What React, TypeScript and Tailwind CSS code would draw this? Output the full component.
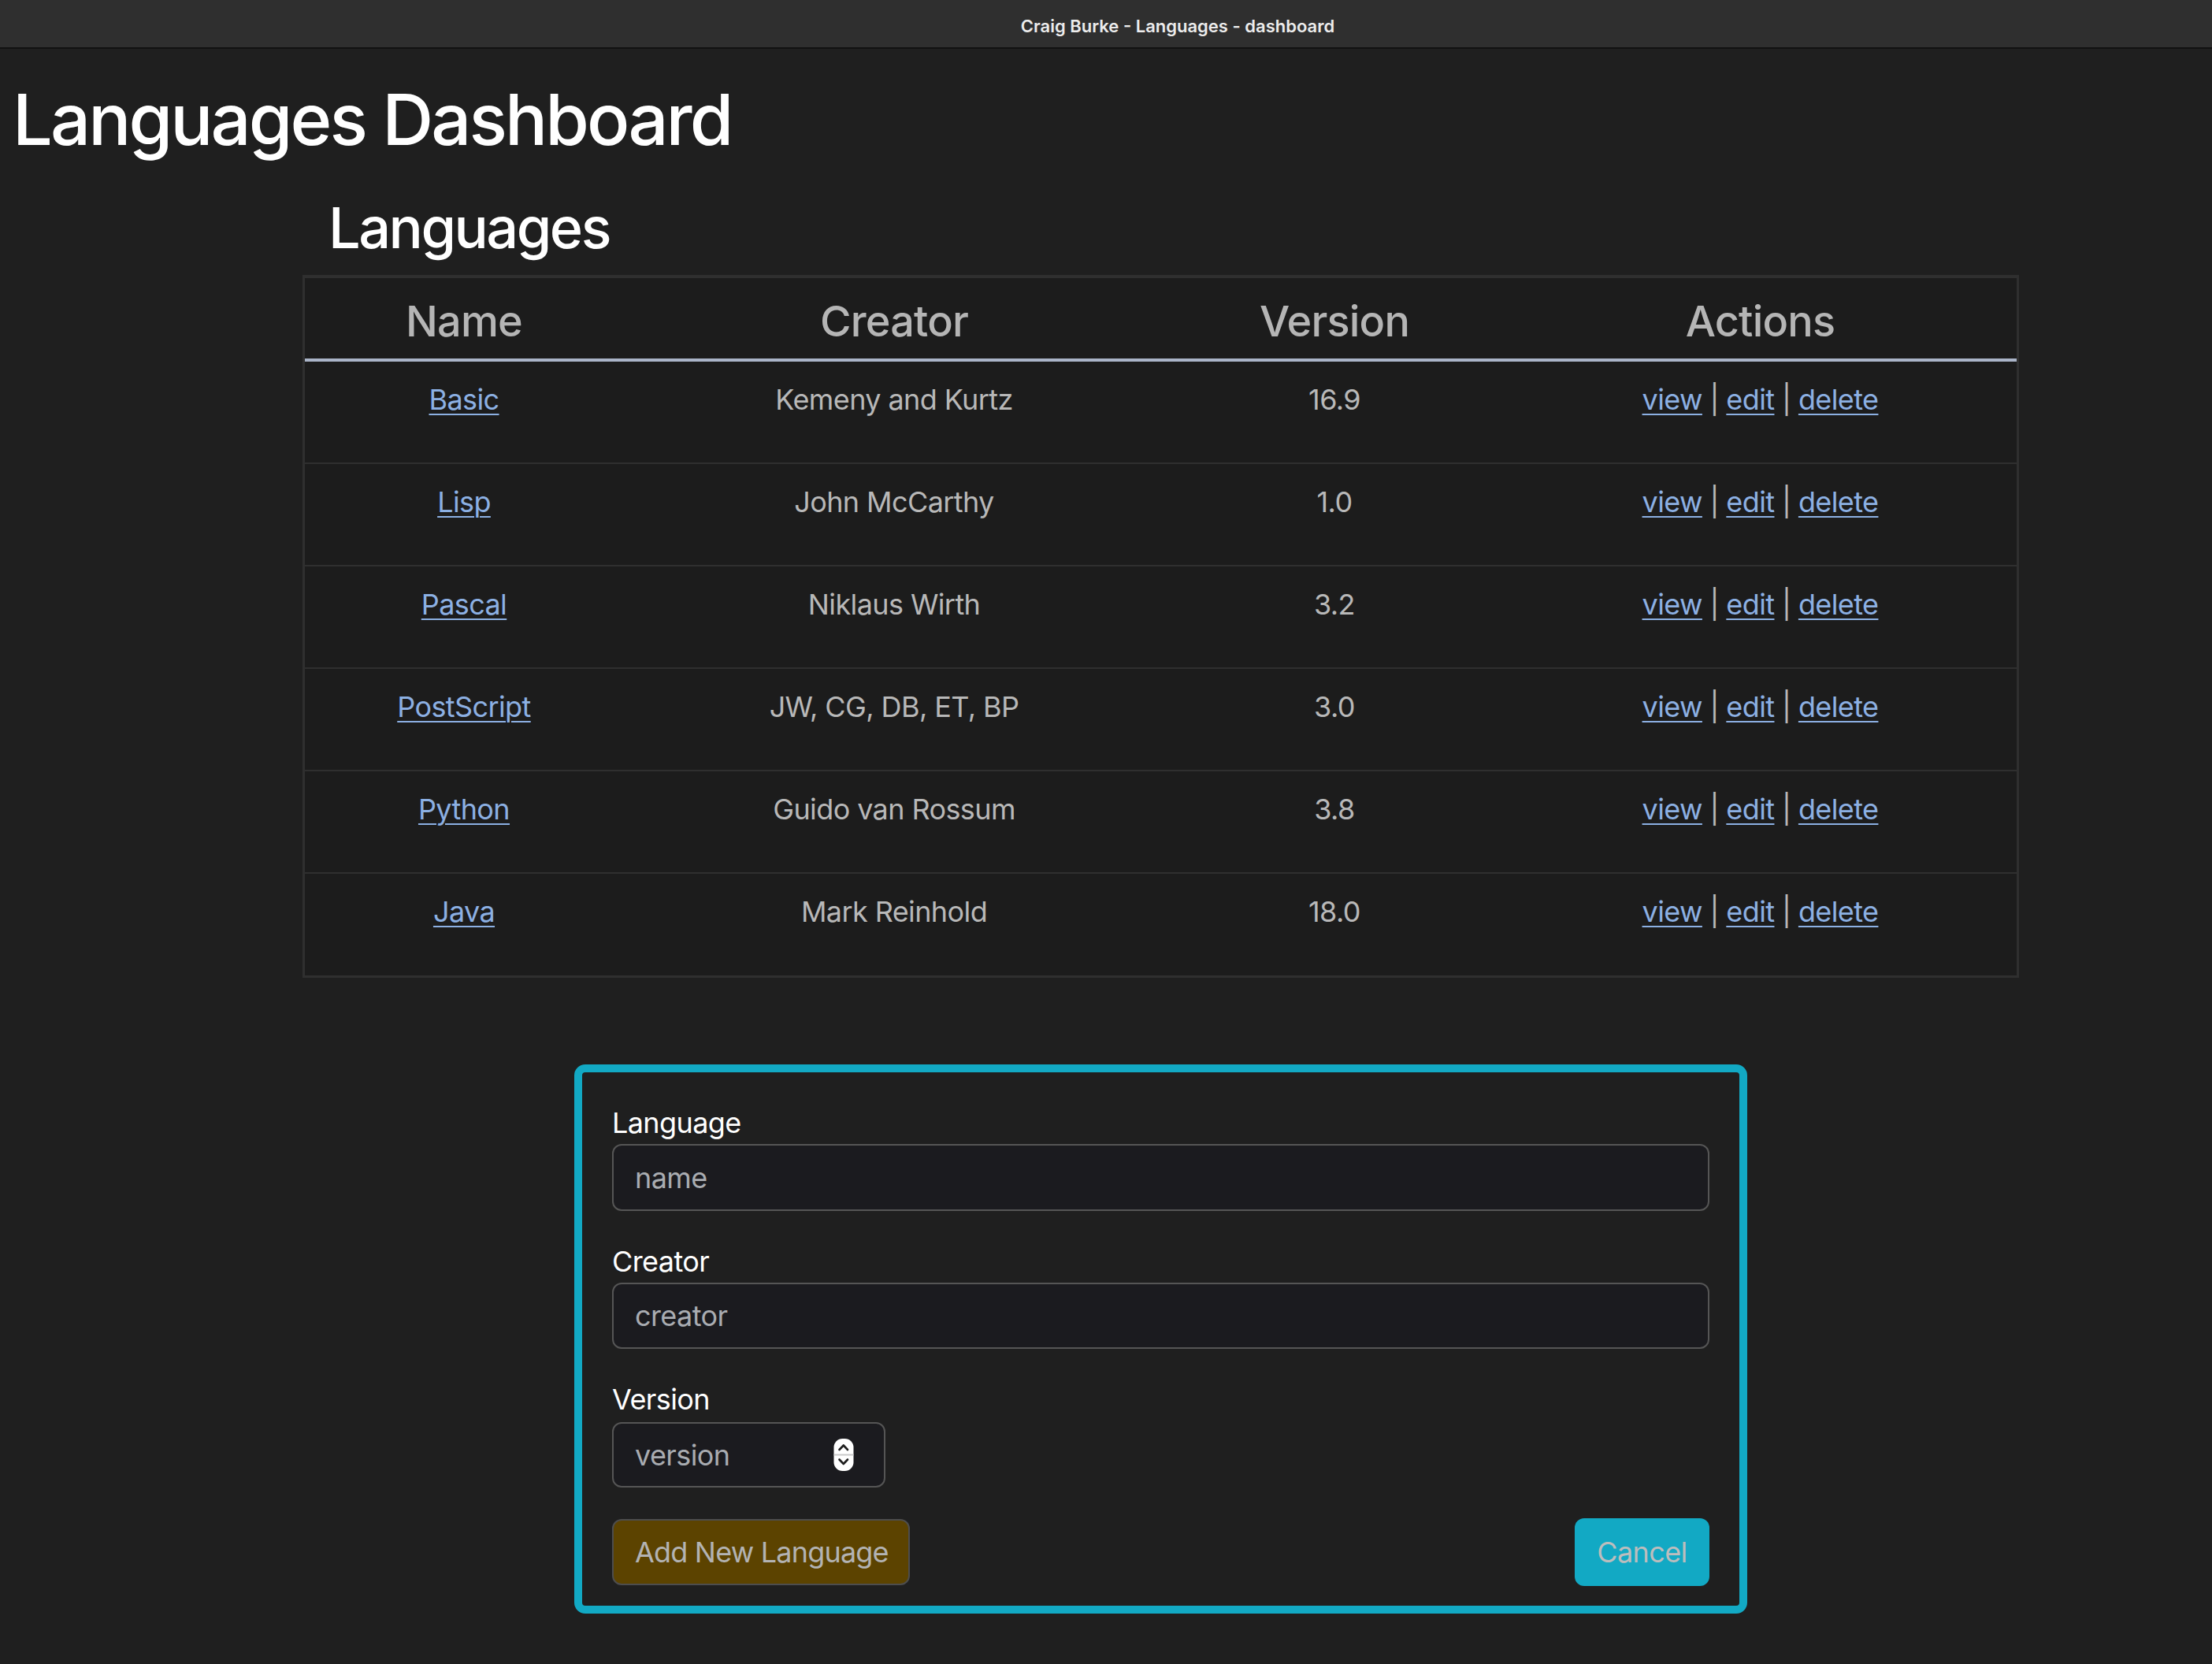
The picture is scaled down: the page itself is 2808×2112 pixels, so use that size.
import React from 'react'

const languages = [
  { name: 'Basic', creator: 'Kemeny and Kurtz', version: '16.9' },
  { name: 'Lisp', creator: 'John McCarthy', version: '1.0' },
  { name: 'Pascal', creator: 'Niklaus Wirth', version: '3.2' },
  { name: 'PostScript', creator: 'JW, CG, DB, ET, BP', version: '3.0' },
  { name: 'Python', creator: 'Guido van Rossum', version: '3.8' },
  { name: 'Java', creator: 'Mark Reinhold', version: '18.0' },
]

const cols = 'grid grid-cols-[404px_688px_430px_1fr]'
const link = 'text-[#8cb0e3] underline underline-offset-[5px] decoration-2'

function Spinner() {
  return (
    <svg width="26" height="41" viewBox="0 0 26 41" className="shrink-0">
      <rect x="0.5" y="0" width="25" height="41" rx="11" fill="#ffffff" />
      <rect x="0.5" y="19.5" width="25" height="2" fill="#c9c9c9" />
      <path d="M7.5 14 L12.8 8.5 L18 14" fill="none" stroke="#1f1f1f" strokeWidth="2.6" strokeLinecap="round" strokeLinejoin="round" />
      <path d="M7.5 26.5 L12.8 32 L18 26.5" fill="none" stroke="#1f1f1f" strokeWidth="2.6" strokeLinecap="round" strokeLinejoin="round" />
    </svg>
  )
}

export default function App() {
  return (
    <div className="min-h-[2112px] bg-[#1f1f1f] font-[Inter,sans-serif] text-[36px] tracking-[-0.6px]">

      {/* Window title bar */}
      <div className="h-[62px] bg-[#2f2f2f] border-b-2 border-[#111111] flex items-center justify-center pl-[182px] pt-[6px]">
        <span className="text-[22px] font-semibold text-[#ececec] tracking-[0px]">Craig Burke - Languages - dashboard</span>
      </div>

      <h1 className="pl-[16px] pt-[36px] text-[90px] leading-[108px] text-white font-medium tracking-[-2.9px]">
        Languages Dashboard
      </h1>

      <div className="ml-[384px] w-[2179px]">
        <h2 className="mt-[40px] ml-[33px] mb-[17px] text-[72px] leading-[86px] text-white font-medium tracking-[-2.5px]">
          Languages
        </h2>

        {/* Table */}
        <div className="border-[3px] border-t-4 border-[#2f2f2f] bg-[#1c1c1c]">
          <div className={`${cols} h-[106px] border-b-4 border-[#aab4c8] text-[54px] leading-[81px] text-[#b5b5b5] font-medium text-center pt-[14px] tracking-[-0.8px]`}>
            <div>Name</div>
            <div>Creator</div>
            <div>Version</div>
            <div>Actions</div>
          </div>
          {languages.map((l, i) => (
            <div
              key={l.name}
              className={`${cols} leading-[54px] text-[#b8b8b8] text-center pt-[21px] ${
                i < languages.length - 1 ? 'h-[130px] border-b-2 border-[#2f2f2f]' : 'h-[129px]'
              }`}
            >
              <div><a className={link}>{l.name}</a></div>
              <div>{l.creator}</div>
              <div>{l.version}</div>
              <div>
                <a className={link}>view</a> | <a className={link}>edit</a> | <a className={link}>delete</a>
              </div>
            </div>
          ))}
        </div>

        {/* Add form */}
        <div className="mx-auto mt-[110px] w-[1489px] border-[10px] border-[#12a9c4] rounded-[14px] px-[38px] pt-[37px] pb-[25px] text-white">
          <div className="leading-[54px]">Language</div>
          <div className="h-[85px] border-2 border-[#555555] rounded-[12px] bg-[#1b1b1f] flex items-center pl-[27px] text-[#a9acb1]">
            name
          </div>

          <div className="mt-[37px] leading-[54px]">Creator</div>
          <div className="h-[84px] border-2 border-[#555555] rounded-[12px] bg-[#1b1b1f] flex items-center pl-[27px] text-[#a9acb1]">
            creator
          </div>

          <div className="mt-[37px] leading-[54px]">Version</div>
          <div className="mt-[2px] w-[347px] h-[83px] border-2 border-[#555555] rounded-[12px] bg-[#1b1b1f] flex items-center justify-between pl-[27px] pr-[38px] text-[#a9acb1]">
            <span>version</span>
            <Spinner />
          </div>

          <div className="mt-[39px] flex items-center justify-between">
            <button type="button" className="h-[84px] w-[378px] rounded-[12px] border-2 border-[#4d4d4d] bg-[#5c4300] text-[#b3b3b3] text-left pl-[27px] tracking-[-0.8px]">
              Add New Language
            </button>
            <button type="button" className="h-[86px] w-[171px] rounded-[12px] bg-[#12a9c4] text-[#bdbdbd]">
              Cancel
            </button>
          </div>
        </div>
      </div>
    </div>
  )
}
